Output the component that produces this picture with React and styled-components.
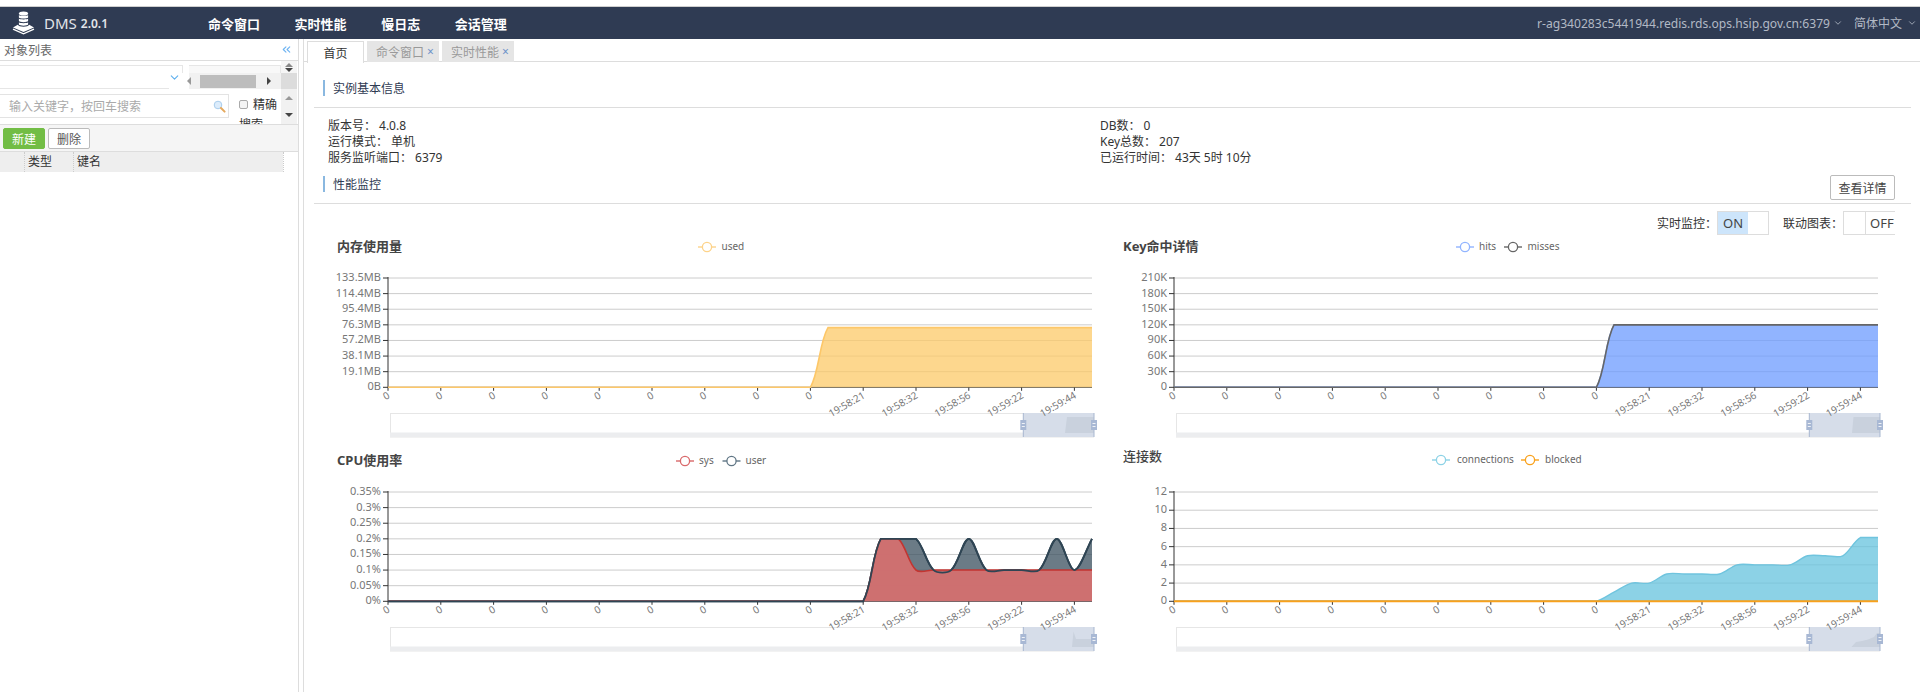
import styled, { createGlobalStyle } from "styled-components";
import { ChevronDown, ChevronsLeft } from "lucide-react";

const GlobalStyle = createGlobalStyle`
  html, body {
    margin: 0;
    height: 692px;
    overflow: hidden;
    background: #fff;
    font-family: "Noto Sans", "Noto Sans CJK SC", sans-serif;
    font-size: 12px;
    color: #333;
  }
  * { box-sizing: border-box; }
`;

const Page = styled.div`
  height: 692px;
  padding-top: 7px;
  display: flex;
  flex-direction: column;
`;

const Header = styled.header`
  height: 32px;
  flex: none;
  display: flex;
  align-items: center;
  background: #2f3b53;
  box-shadow: 0 -1px 0 #cfcfcf;
`;

const Brand = styled.div`
  width: 208px;
  flex: none;
  display: flex;
  align-items: center;
  padding-left: 12px;
  color: #e2e5ea;
  font-size: 15px;
  svg { margin-right: 8px; }
  small {
    font-size: 12px;
    font-weight: 600;
    margin-left: 4px;
  }
`;

const Nav = styled.nav`
  display: flex;
  gap: 34.6px;
  a {
    color: #fff;
    font-size: 13px;
    font-weight: 700;
  }
`;

const HeaderRight = styled.div`
  margin-left: auto;
  display: flex;
  align-items: center;
  padding-right: 3px;
  color: #b2b9c5;
  font-size: 12.1px;
  span { display: inline-flex; align-items: center; gap: 3px; }
  span + span { margin-left: 11px; font-size: 12px; gap: 5px; }
`;

const Body = styled.div`
  flex: 1;
  display: flex;
  min-height: 0;
`;

const Sidebar = styled.aside`
  width: 299px;
  flex: none;
  border-right: 1px solid #ddd;
`;

const SideTitle = styled.div`
  height: 22px;
  display: flex;
  align-items: center;
  justify-content: space-between;
  padding: 0 5px 0 4px;
  border-bottom: 1px solid #ddd;
  color: #666;
  svg { color: #6db3f2; }
`;

const Filter = styled.div`
  height: 63px;
  display: grid;
  grid-template-columns: 281px 16px;
  overflow: hidden;
  border-bottom: 1px solid #ddd;
  box-sizing: content-box;
`;

const FilterRow = styled.div`
  position: relative;
  height: 28px;
  padding-top: 4px;
  display: flex;
  gap: 6px;
`;

const SelectBox = styled.div`
  position: relative;
  width: ${(p) => p.$width}px;
  height: 24px;
  border: 1px solid #e6e6e6;
  border-left: none;
  background: ${(p) => (p.$muted ? "#f8f8f8" : "#fff")};
  svg {
    position: absolute;
    z-index: 2;
    right: 1px;
    top: 5px;
    color: #5fb0ee;
  }
`;

const HBar = styled.div`
  position: absolute;
  right: 0;
  top: 12px;
  width: 112px;
  height: 16px;
  display: flex;
  align-items: center;
  padding-left: 20px;
  background: linear-gradient(90deg, #fff 0, #fff 20px, #f1f1f1 20px);
`;

const Thumb = styled.div`
  width: 56px;
  height: 13px;
  margin: 0 11px 0 9px;
  background: #bdbdbd;
`;

const Arrow = styled.i`
  display: block;
  width: 0;
  height: 0;
  border: 4px solid transparent;
  ${(p) => p.$dir === "up" && `border-top: none; border-bottom: 4px solid ${p.$color};`}
  ${(p) => p.$dir === "down" && `border-bottom: none; border-top: 4px solid ${p.$color};`}
  ${(p) => p.$dir === "left" && `border-left: none; border-right: 4px solid ${p.$color}; margin-left: -2px;`}
  ${(p) => p.$dir === "right" && `border-right: none; border-left: 4px solid ${p.$color};`}
`;

const SearchRow = styled.div`
  display: flex;
  margin-top: 5px;
`;

const SearchBox = styled.div`
  width: 229px;
  height: 24px;
  flex: none;
  display: flex;
  align-items: center;
  justify-content: space-between;
  padding: 0 2px 0 9px;
  border: 1px solid #e3e3e3;
  border-left: none;
  color: #aaa;
`;

const ExactLabel = styled.div`
  width: 42px;
  margin-left: 10px;
  line-height: 20px;
  padding-top: 1px;
  i {
    display: inline-block;
    width: 9px;
    height: 9px;
    margin-right: 5px;
    border: 1px solid #aaa;
    border-radius: 2px;
    background: #f4f4f4;
  }
`;

const VBar = styled.div`
  display: flex;
  flex-direction: column;
`;

const VTop = styled.div`
  height: 12px;
  display: flex;
  flex-direction: column;
  align-items: center;
  justify-content: center;
  gap: 1px;
  background: #f5f5f5;
`;

const VCorner = styled.div`
  height: 16px;
  background: #dcdcdc;
`;

const VBottom = styled.div`
  height: 35px;
  display: flex;
  flex-direction: column;
  align-items: center;
  justify-content: space-between;
  padding: 7px 0 7px;
  background: #f1f1f1;
`;

const Toolbar = styled.div`
  height: 27px;
  display: flex;
  gap: 3px;
  padding: 3px 3px 0;
  background: #f5f5f5;
  border-bottom: 1px solid #ddd;
`;

const Button = styled.button`
  height: 21px;
  width: ${(p) => p.$width}px;
  padding: 0;
  border-radius: 2px;
  font: inherit;
  border: 1px solid ${(p) => (p.$primary ? "#72bd45" : "#bbb")};
  background: ${(p) => (p.$primary ? "#72bd45" : "#fff")};
  color: ${(p) => (p.$primary ? "#fff" : "#555")};
`;

const TableHead = styled.div`
  height: 19px;
  width: 297px;
  display: grid;
  grid-template-columns: 24px 49px 210px 1fr;
  line-height: 20px;
  border-bottom: 1px solid #ddd;
`;

const HeadCell = styled.div`
  padding-left: 3px;
  background: ${(p) => (p.$blank ? "#fff" : "#eee")};
  border-left: ${(p) => (p.$first ? "none" : "1px dotted #ccc")};
`;

const Main = styled.main`
  flex: 1;
  min-width: 0;
  margin-left: 4px;
  border-left: 1px solid #ddd;
`;

const Tabs = styled.div`
  height: 23px;
  padding: 2px 0 0 3px;
  display: flex;
  gap: 3px;
  border-bottom: 1px solid #ddd;
`;

const Tab = styled.div`
  width: ${(p) => p.$width}px;
  height: 21px;
  display: flex;
  align-items: center;
  gap: 3px;
  ${(p) =>
    p.$active
      ? "justify-content: center; background: #fff; border: 1px solid #ddd; border-bottom: none; height: 22px; color: #333;"
      : "padding-left: 9px; background: #e5e5e5; color: #999;"}
  b {
    color: #6f93c9;
    font-weight: 400;
    font-size: 12px;
  }
`;

const SectionHead = styled.div`
  display: flex;
  justify-content: space-between;
  align-items: flex-start;
  height: ${(p) => p.$height}px;
  margin: 0 9px 0 10px;
  padding: ${(p) => p.$top}px 16px 0 9px;
  border-bottom: 1px solid #ddd;
`;

const SectionTitle = styled.div`
  height: 16px;
  line-height: 17px;
  padding-left: 8px;
  margin-top: ${(p) => p.$offset || 0}px;
  border-left: 2px solid #8ab8e0;
  color: #2f3b53;
`;

const InfoGrid = styled.div`
  display: grid;
  grid-template-columns: 772px 1fr;
  padding: 10px 0 0 24px;
  line-height: 16px;
  color: #333;
`;

const InfoLine = styled.div`
  span { margin-left: 3px; }
`;

const DetailButton = styled.button`
  width: 65px;
  height: 25px;
  padding: 0;
  font: inherit;
  color: #444;
  background: #fff;
  border: 1px solid #bbb;
  border-radius: 2px;
`;

const SwitchRow = styled.div`
  height: 24px;
  margin-top: 7px;
  display: flex;
  justify-content: flex-end;
  align-items: center;
  padding-right: 25px;
  span { color: #333; }
`;

const Toggle = styled.div`
  display: flex;
  width: 52px;
  height: 24px;
  margin-right: ${(p) => p.$gap || 0}px;
  border: 1px solid #ddd;
  border-right: ${(p) => (p.$off ? "none" : "1px solid #ddd")};
`;

const TogglePart = styled.div`
  width: ${(p) => p.$width}px;
  line-height: 22px;
  padding-left: ${(p) => (p.$divider ? 4 : 5)}px;
  font-size: 13px;
  color: #444;
  background: ${(p) => (p.$on ? "#cde5fb" : "#fff")};
  border-left: ${(p) => (p.$divider ? "1px solid #ddd" : "none")};
`;

const ChartGrid = styled.div`
  display: grid;
  grid-template-columns: 786px 786px;
  grid-auto-rows: 214px;
  margin: 1px 0 0 16px;
`;

const ChartSvg = styled.svg`
  display: block;
  width: 786px;
  height: 214px;
  overflow: visible;
  font-family: "Noto Sans", "Noto Sans CJK SC", sans-serif;
`;

const ChartTitle = styled.text`
  font-size: 13px;
  font-weight: ${(p) => (p.$light ? 500 : 700)};
  fill: #444;
`;

const LegendText = styled.text`
  font-size: 10px;
  fill: #666;
`;

const AxisText = styled.text`
  font-size: ${(p) => p.$size || 11}px;
  fill: #777;
`;

const AXIS_LEFT = 68;
const AXIS_RIGHT = 772;
const TOP = 42;
const BOTTOM = 151.3;
const STEP = 17.6;

// same idea as the echarts smooth line: control points from neighbour points,
// clamped to the value range so the flat tops don't overshoot
function smoothPath(points, smooth = 0.32) {
  const ys = points.map((p) => p[1]);
  const minY = Math.min(...ys);
  const maxY = Math.max(...ys);
  const clamp = (v) => Math.min(maxY, Math.max(minY, v));
  let d = `M${points[0][0]} ${points[0][1]}`;
  const controls = points.map((p, i) => {
    const prev = points[i - 1] || p;
    const next = points[i + 1] || p;
    const vx = next[0] - prev[0];
    const vy = next[1] - prev[1];
    const d0 = Math.hypot(p[0] - prev[0], p[1] - prev[1]);
    const d1 = Math.hypot(next[0] - p[0], next[1] - p[1]);
    const ratio = d0 + d1 === 0 ? 0 : d1 / (d0 + d1);
    return [
      [p[0] - vx * smooth * (1 - ratio), clamp(p[1] - vy * smooth * (1 - ratio))],
      [p[0] + vx * smooth * ratio, clamp(p[1] + vy * smooth * ratio)],
    ];
  });
  for (let i = 1; i < points.length; i++) {
    const a = controls[i - 1][1];
    const b = controls[i][0];
    d += `C${a[0]} ${a[1]} ${b[0]} ${b[1]} ${points[i][0]} ${points[i][1]}`;
  }
  return d;
}

const flat = (n, tail) => [...Array(n).fill(0), ...tail];
const same = (n, v) => Array(n).fill(v);

const tickLabels = [...Array(9).fill("0"), "19:58:21", "19:58:32", "19:58:56", "19:59:22", "19:59:44"];

const charts = [
  {
    title: "内存使用量",
    titleY: 15,
    max: 7,
    yLabels: ["0B", "19.1MB", "38.1MB", "57.2MB", "76.3MB", "95.4MB", "114.4MB", "133.5MB"],
    legend: [{ name: "used", color: "#fdd38a", cx: 387, tx: 401.5, y: 11 }],
    series: [{ data: flat(25, same(16, 3.82)), line: "#fdc768", fill: "#fcca68", opacity: 0.75, width: 1.6 }],
    shadow: "703,197 745,197 747,181 774,181 774,197",
  },
  {
    title: "Key命中详情",
    titleY: 15,
    max: 7,
    yLabels: ["0", "30K", "60K", "90K", "120K", "150K", "180K", "210K"],
    legend: [
      { name: "hits", color: "#91b4ff", cx: 359, tx: 373, y: 11 },
      { name: "misses", color: "#666", cx: 407, tx: 421.5, y: 11 },
    ],
    series: [
      { data: flat(25, same(16, 4)), line: "#7da5fb", fill: "#6c9bff", opacity: 0.75, width: 1.5 },
      { data: flat(25, same(16, 4)), line: "#666", width: 1.6 },
    ],
    shadow: "703,197 746,197 747.5,181 774,181 774,197",
  },
  {
    title: "CPU使用率",
    titleY: 15,
    max: 0.35,
    yLabels: ["0%", "0.05%", "0.1%", "0.15%", "0.2%", "0.25%", "0.3%", "0.35%"],
    legend: [
      { name: "sys", color: "#d9696b", cx: 365, tx: 379, y: 11 },
      { name: "user", color: "#5f7584", cx: 411.5, tx: 425.5, y: 11 },
    ],
    series: [
      {
        data: flat(28, [0.2, 0.2, 0.2, 0.1, 0.1, 0.2, 0.1, 0.1, 0.1, 0.1, 0.2, 0.1, 0.2]),
        line: "#2f4554",
        fill: "#3a4f5e",
        opacity: 0.75,
        width: 1.8,
      },
      {
        data: flat(28, [0.2, 0.2, 0.1, 0.1, 0.1, 0.1, 0.1, 0.1, 0.1, 0.1, 0.1, 0.1, 0.1]),
        line: "#c23531",
        fill: "#d26f6f",
        opacity: 0.96,
        width: 1.6,
      },
      {
        data: flat(28, [0.2, 0.2, 0.2, 0.1, 0.1, 0.2, 0.1, 0.1, 0.1, 0.1, 0.2, 0.1, 0.2]),
        line: "#2f4554",
        width: 1.8,
      },
    ],
    shadow: "703,197 752,197 753.5,181.5 756,189 774,189 774,197",
  },
  {
    title: "连接数",
    titleY: 11,
    light: true,
    max: 12,
    yLabels: ["0", "2", "4", "6", "8", "10", "12"],
    legend: [
      { name: "connections", color: "#8cd2e6", cx: 335, tx: 351, y: 10 },
      { name: "blocked", color: "#f9a11b", cx: 424, tx: 439, y: 10 },
    ],
    series: [
      {
        data: flat(25, [1, 2, 2, 3, 3, 3, 3, 4, 4, 4, 4, 5, 5, 5, 7, 7]),
        line: "#6fc4de",
        fill: "#66c3de",
        opacity: 0.75,
        width: 1.4,
      },
      { data: flat(41, []), line: "#f9a11b", width: 2 },
    ],
    shadow: "703,197 745.5,197 750,192 756,191 762,189.5 768,187 771,183 774,183 774,197",
  },
];

function SliderHandle({ x }) {
  return (
    <g>
      <line x1={x} x2={x} y1={177} y2={201} stroke="#a8b7d0" />
      <rect x={x - 3} y={184} width={6} height={10} fill="#a8b8d4" />
      <path d={`M${x - 1.5} 187.5h3M${x - 1.5} 190.5h3`} stroke="#eef1f6" />
    </g>
  );
}

function Chart({ chart }) {
  const { title, titleY, light, max, yLabels, legend, series, shadow } = chart;
  const count = yLabels.length - 1;
  const toY = (v) => BOTTOM - (v / max) * (BOTTOM - TOP);

  return (
    <ChartSvg viewBox="0 0 786 214">
      <ChartTitle x={17} y={titleY} $light={light}>
        {title}
      </ChartTitle>

      {legend.map((item) => (
        <g key={item.name}>
          <line x1={item.cx - 9} x2={item.cx + 9} y1={item.y} y2={item.y} stroke={item.color} strokeWidth={1.4} />
          <circle cx={item.cx} cy={item.y} r={4.6} fill="#fff" stroke={item.color} strokeWidth={1.3} />
          <LegendText x={item.tx} y={item.y + 3}>
            {item.name}
          </LegendText>
        </g>
      ))}

      <rect x={70.5} y={177.5} width={703} height={23.5} fill="#fff" stroke="#e6e6e6" />
      <rect x={70} y={196.5} width={704} height={4.5} fill="#ecedef" />
      <rect x={703.3} y={177} width={70.7} height={24} fill="#d6dde9" />
      <polygon points={shadow} fill="#c9d1dd" />
      <SliderHandle x={703.3} />
      <SliderHandle x={774} />

      {yLabels.map((label, i) => {
        const y = BOTTOM - (i * (BOTTOM - TOP)) / count;
        return (
          <g key={label}>
            {i > 0 && <line x1={AXIS_LEFT} x2={AXIS_RIGHT} y1={y} y2={y} stroke="#ccc" />}
            <line x1={AXIS_LEFT - 5} x2={AXIS_LEFT} y1={y} y2={y} stroke="#333" />
            <AxisText x={AXIS_LEFT - 7} y={y + 3} textAnchor="end">
              {label}
            </AxisText>
          </g>
        );
      })}

      <line x1={AXIS_LEFT} x2={AXIS_LEFT} y1={TOP - 1} y2={BOTTOM} stroke="#333" />
      <line x1={AXIS_LEFT} x2={AXIS_RIGHT} y1={BOTTOM} y2={BOTTOM} stroke="#444" />
      {tickLabels.map((label, k) => {
        const x = AXIS_LEFT + k * 52.8;
        return (
          <g key={k}>
            <line x1={x} x2={x} y1={BOTTOM} y2={BOTTOM + 3.5} stroke="#333" />
            <AxisText
              $size={10}
              transform={`translate(${x - 1} ${BOTTOM + 4}) rotate(-30)`}
              textAnchor="end"
              dy="0.7em"
            >
              {label}
            </AxisText>
          </g>
        );
      })}

      {series.map((s, i) => {
        const points = s.data.map((v, k) => [AXIS_LEFT + k * STEP, toY(v)]);
        const d = smoothPath(points);
        return (
          <g key={i}>
            {s.fill && (
              <path d={`${d}L${AXIS_RIGHT} ${BOTTOM}L${AXIS_LEFT} ${BOTTOM}Z`} fill={s.fill} opacity={s.opacity} />
            )}
            <path d={d} fill="none" stroke={s.line} strokeWidth={s.width} />
          </g>
        );
      })}
    </ChartSvg>
  );
}

function Logo() {
  return (
    <svg width="24" height="24" viewBox="0 0 24 24" fill="#fff">
      <ellipse cx="11.5" cy="2.6" rx="4.6" ry="2" />
      <path d="M6.9 3.9c.8 1.2 8.4 1.2 9.2 0v2.5c-.8 1.4-8.4 1.4-9.2 0z" />
      <path d="M6.9 7.6c.8 1.2 8.4 1.2 9.2 0v2.5c-.8 1.4-8.4 1.4-9.2 0z" />
      <path d="M6.9 11.3c.8 1.2 8.4 1.2 9.2 0v2.3c-.8 1.4-8.4 1.4-9.2 0z" />
      <path d="M1 16.4l4.8-2.6c.9 2.6 10.5 2.6 11.4 0l4.8 2.6-10.5 4.6z" />
      <path d="M1 18.2l10.5 4.6L22 18.2" fill="none" stroke="#fff" strokeWidth="1.3" />
    </svg>
  );
}

function SearchIcon() {
  return (
    <svg width="13" height="13" viewBox="0 0 13 13">
      <circle cx="5" cy="5" r="3.8" fill="#dcecfb" stroke="#a9cdec" />
      <path d="M8 8l3.6 3.6" stroke="#e5a95e" strokeWidth="2" strokeLinecap="round" />
    </svg>
  );
}

function App() {
  return (
    <Page>
      <GlobalStyle />
      <Header>
        <Brand>
          <Logo />
          DMS<small>2.0.1</small>
        </Brand>
        <Nav>
          <a>命令窗口</a>
          <a>实时性能</a>
          <a>慢日志</a>
          <a>会话管理</a>
        </Nav>
        <HeaderRight>
          <span>
            r-ag340283c5441944.redis.rds.ops.hsip.gov.cn:6379
            <ChevronDown size={10} />
          </span>
          <span>
            简体中文
            <ChevronDown size={10} />
          </span>
        </HeaderRight>
      </Header>

      <Body>
        <Sidebar>
          <SideTitle>
            对象列表
            <ChevronsLeft size={13} />
          </SideTitle>
          <Filter>
            <div>
              <FilterRow>
                <SelectBox $width={183}>
                  <ChevronDown size={13} />
                </SelectBox>
                <SelectBox $width={92} $muted />
                <HBar>
                  <Arrow $dir="left" $color="#999" />
                  <Thumb />
                  <Arrow $dir="right" $color="#444" />
                </HBar>
              </FilterRow>
              <SearchRow>
                <SearchBox>
                  输入关键字，按回车搜索
                  <SearchIcon />
                </SearchBox>
                <ExactLabel>
                  <i />
                  精确搜索
                </ExactLabel>
              </SearchRow>
            </div>
            <VBar>
              <VTop>
                <Arrow $dir="up" $color="#888" />
                <Arrow $dir="down" $color="#444" />
              </VTop>
              <VCorner />
              <VBottom>
                <Arrow $dir="up" $color="#999" />
                <Arrow $dir="down" $color="#444" />
              </VBottom>
            </VBar>
          </Filter>
          <Toolbar>
            <Button $primary $width={42}>
              新建
            </Button>
            <Button $width={42}>删除</Button>
          </Toolbar>
          <TableHead>
            <HeadCell $first />
            <HeadCell>类型</HeadCell>
            <HeadCell>键名</HeadCell>
            <HeadCell $blank />
          </TableHead>
        </Sidebar>

        <Main>
          <Tabs>
            <Tab $active $width={57}>
              首页
            </Tab>
            <Tab $width={72}>
              命令窗口<b>×</b>
            </Tab>
            <Tab $width={72}>
              实时性能<b>×</b>
            </Tab>
          </Tabs>

          <SectionHead $height={46} $top={18}>
            <SectionTitle>实例基本信息</SectionTitle>
          </SectionHead>
          <InfoGrid>
            <InfoLine>
              版本号：<span>4.0.8</span>
            </InfoLine>
            <InfoLine>
              DB数：<span>0</span>
            </InfoLine>
            <InfoLine>
              运行模式：<span>单机</span>
            </InfoLine>
            <InfoLine>
              Key总数：<span>207</span>
            </InfoLine>
            <InfoLine>
              服务监听端口：<span>6379</span>
            </InfoLine>
            <InfoLine>
              已运行时间：<span>43天 5时 10分</span>
            </InfoLine>
          </InfoGrid>

          <SectionHead $height={38} $top={9}>
            <SectionTitle $offset={1}>性能监控</SectionTitle>
            <DetailButton>查看详情</DetailButton>
          </SectionHead>
          <SwitchRow>
            <span>实时监控：</span>
            <Toggle $gap={14}>
              <TogglePart $on $width={30}>
                ON
              </TogglePart>
              <TogglePart $width={20} />
            </Toggle>
            <span>联动图表：</span>
            <Toggle $off>
              <TogglePart $width={21} />
              <TogglePart $divider $width={30}>
                OFF
              </TogglePart>
            </Toggle>
          </SwitchRow>

          <ChartGrid>
            {charts.map((chart) => (
              <Chart key={chart.title} chart={chart} />
            ))}
          </ChartGrid>
        </Main>
      </Body>
    </Page>
  );
}

export default App;
